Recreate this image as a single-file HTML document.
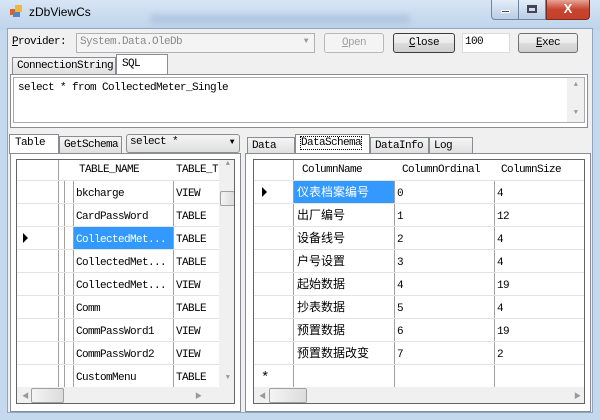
<!DOCTYPE html>
<html><head><meta charset="utf-8"><style>
*{box-sizing:border-box;margin:0;padding:0}
body{width:600px;height:420px;overflow:hidden;background:#c4d8ee;position:relative;font-family:"Liberation Mono","Noto Sans CJK SC",monospace;font-size:11px;letter-spacing:-0.6px;color:#000}
.a{position:absolute}
.client{left:7px;top:28px;width:586px;height:385px;background:#f0f0f0;border:1px solid #8ea6c2}
.btn{border:1px solid #707070;border-radius:3px;background:linear-gradient(#f2f2f2,#ebebeb 50%,#dddddd 50%,#cfcfcf);text-align:center;line-height:18px}
.tab{border:1px solid #898c95;border-bottom:none;background:linear-gradient(#f5f5f5,#e0e0e0);line-height:16px;padding-left:4px}
.tabsel{background:#fff;border:1px solid #898c95;border-bottom:none;padding-left:5px;line-height:18px}
.grid{background:#fff;border:1px solid #646464;overflow:hidden}
.hl{background:#a0a0a0;width:1px}
.row{height:1px;background:#e3e3e3}
.cell{line-height:23px;padding-left:2px;white-space:nowrap}
.lat{padding-top:3px}
.cjk{font-family:"Noto Sans CJK SC","WenQuanYi Zen Hei",sans-serif;font-size:12px;letter-spacing:0}
.sb{background:#f0f0f0}
.thumb{border:1px solid #a0a0a0;border-radius:2px;background:linear-gradient(90deg,#f4f4f4,#dcdcdc)}
</style></head><body>
<div class="a" style="left:0;top:0;width:600px;height:30px;background:linear-gradient(#d7e5f5,#bed3ea)"></div>
<div class="a" style="left:150px;top:14px;width:260px;height:10px;background:#9fb8d4;opacity:.5;filter:blur(3px)"></div>
<div class="a" style="left:10px;top:9px;width:6px;height:6px;background:#d9622b"></div>
<div class="a" style="left:15px;top:5px;width:7px;height:7px;background:#f0b83a"></div>
<div class="a" style="left:13px;top:12px;width:7px;height:5px;background:#4f86c6"></div>
<div class="a" style="left:29px;top:5px;font-family:'Liberation Sans',sans-serif;font-size:12px;letter-spacing:0">zDbViewCs</div>
<div class="a" style="left:491px;top:0;width:28px;height:20px;border:1px solid #6d85a3;border-top:none;border-radius:0 0 0 4px;background:linear-gradient(#e4edf8,#b9cde5)"><div class="a" style="left:9px;top:10px;width:9px;height:3px;background:#445;border:1px solid #fff"></div></div>
<div class="a" style="left:519px;top:0;width:27px;height:20px;border:1px solid #6d85a3;border-top:none;border-left:none;background:linear-gradient(#e4edf8,#b9cde5)"><div class="a" style="left:8px;top:5px;width:10px;height:8px;border:2px solid #445;border-top-width:3px"></div></div>
<div class="a" style="left:546px;top:0;width:44px;height:20px;border:1px solid #7a2a20;border-top:none;border-radius:0 0 4px 0;background:linear-gradient(#e8a495,#c7442f 50%,#c4402a);color:#fff;font:bold 13px 'Liberation Sans',sans-serif;text-align:center;line-height:18px;letter-spacing:0">X</div>
<div class="a client"></div>
<div class="a" style="left:12px;top:36px"><u>P</u>rovider:</div>
<div class="a" style="left:76px;top:33px;width:239px;height:20px;border:1px solid #b0b0b0;background:#f4f4f4;color:#8a8a8a;padding:2px 0 0 3px">System.Data.OleDb<span class="a" style="right:6px;top:3px;color:#999;font-size:8px">▼</span></div>
<div class="a btn" style="left:324px;top:33px;width:60px;height:20px;color:#a0a0a0;border-color:#b8b8b8;background:#f4f4f4"><u>O</u>pen</div>
<div class="a btn" style="left:393px;top:33px;width:62px;height:20px;border-color:#3c3c3c"><u>C</u>lose</div>
<div class="a" style="left:462px;top:33px;width:48px;height:20px;border:1px solid #dcdcdc;background:#fff;padding:2px 0 0 2px">100</div>
<div class="a btn" style="left:518px;top:33px;width:60px;height:20px"><u>E</u>xec</div>
<div class="a tab" style="left:12px;top:57px;width:104px;height:17px">ConnectionString</div>
<div class="a tabsel" style="left:116px;top:54px;width:52px;height:21px">SQL</div>
<div class="a" style="left:10px;top:74px;width:578px;height:54px;border:1px solid #898c95;background:#fff"></div>
<div class="a" style="left:13px;top:77px;width:572px;height:46px;border:1px solid #ababab;background:#fff;padding:4px 0 0 4px">select * from CollectedMeter_Single</div>
<div class="a sb" style="left:567px;top:78px;width:17px;height:44px;color:#999;font-size:7px;text-align:center;line-height:14px">▲<br><br>▼</div>
<div class="a tabsel" style="left:9px;top:134px;width:50px;height:20px;line-height:17px">Table</div>
<div class="a tab" style="left:59px;top:136px;width:63px;height:17px">GetSchema</div>
<div class="a" style="left:126px;top:134px;width:114px;height:19px;border:1px solid #8e8f8f;border-radius:3px;background:linear-gradient(#f4f4f4,#dfdfdf);padding:1px 0 0 3px">select *<span class="a" style="right:5px;top:3px;font-size:8px">▼</span></div>
<div class="a" style="left:10px;top:153px;width:231px;height:259px;border:1px solid #898c95;background:#fff"></div>
<div class="a grid" style="left:16px;top:159px;width:219px;height:245px">
  <div class="a" style="left:62px;top:4px">TABLE_NAME</div>
  <div class="a" style="left:159px;top:4px">TABLE_T</div>
  <div class="a hl" style="left:41px;top:0;height:227px"></div>
  <div class="a hl" style="left:47px;top:20px;height:207px"></div>
  <div class="a hl" style="left:56px;top:20px;height:207px"></div>
  <div class="a hl" style="left:156px;top:20px;height:207px"></div>
  <div class="a" style="left:0;top:20px;width:202px">
   <div class="a row" style="top:0;width:202px"></div><div class="a row" style="top:23px;width:202px"></div><div class="a row" style="top:46px;width:202px"></div><div class="a row" style="top:69px;width:202px"></div><div class="a row" style="top:92px;width:202px"></div><div class="a row" style="top:115px;width:202px"></div><div class="a row" style="top:138px;width:202px"></div><div class="a row" style="top:161px;width:202px"></div><div class="a row" style="top:184px;width:202px"></div>
   <div class="a" style="left:57px;top:47px;width:99px;height:22px;background:#3399ff"></div>
   <div class="a" style="left:6px;top:53px;width:0;height:0;border-left:5px solid #000;border-top:5px solid transparent;border-bottom:5px solid transparent"></div>
   <div class="a cell lat" style="left:57px;top:0">bkcharge<br>CardPassWord<br><span style="color:#fff">CollectedMet...</span><br>CollectedMet...<br>CollectedMet...<br>Comm<br>CommPassWord1<br>CommPassWord2<br>CustomMenu</div>
   <div class="a cell lat" style="left:157px;top:0">VIEW<br>TABLE<br>TABLE<br>TABLE<br>VIEW<br>TABLE<br>VIEW<br>VIEW<br>TABLE</div>
  </div>
  <div class="a sb" style="left:202px;top:0;width:17px;height:227px;color:#999;font-size:7px;text-align:center">▲</div>
  <div class="a thumb" style="left:203px;top:31px;width:15px;height:15px"></div>
  <div class="a" style="left:202px;top:214px;width:17px;font-size:7px;color:#999;text-align:center">▼</div>
  <div class="a sb" style="left:0;top:227px;width:219px;height:18px;font-size:7px;color:#999"><span class="a" style="left:5px;top:4px">◀</span><div class="a thumb" style="left:14px;top:1px;width:33px;height:15px"></div><span class="a" style="left:178px;top:4px">▶</span></div>
</div>
<div class="a tab" style="left:247px;top:137px;width:48px;height:16px">Data</div>
<div class="a tabsel" style="left:295px;top:134px;width:75px;height:20px;line-height:17px"><span style="outline:1px dotted #000">DataSchema</span></div>
<div class="a tab" style="left:370px;top:137px;width:59px;height:16px">DataInfo</div>
<div class="a tab" style="left:429px;top:137px;width:44px;height:16px">Log</div>
<div class="a" style="left:245px;top:153px;width:346px;height:259px;border:1px solid #898c95;background:#fff"></div>
<div class="a grid" style="left:253px;top:159px;width:332px;height:245px">
  <div class="a" style="left:48px;top:4px">ColumnName</div>
  <div class="a" style="left:148px;top:4px">ColumnOrdinal</div>
  <div class="a" style="left:247px;top:4px">ColumnSize</div>
  <div class="a hl" style="left:39px;top:0;height:227px"></div>
  <div class="a hl" style="left:140px;top:20px;height:207px"></div>
  <div class="a hl" style="left:240px;top:20px;height:207px"></div>
  <div class="a" style="left:0;top:20px;width:331px">
   <div class="a row" style="top:0;width:331px"></div><div class="a row" style="top:23px;width:331px"></div><div class="a row" style="top:46px;width:331px"></div><div class="a row" style="top:69px;width:331px"></div><div class="a row" style="top:92px;width:331px"></div><div class="a row" style="top:115px;width:331px"></div><div class="a row" style="top:138px;width:331px"></div><div class="a row" style="top:161px;width:331px"></div><div class="a row" style="top:184px;width:331px"></div>
   <div class="a" style="left:40px;top:1px;width:100px;height:22px;background:#3399ff"></div>
   <div class="a" style="left:8px;top:7px;width:0;height:0;border-left:5px solid #000;border-top:5px solid transparent;border-bottom:5px solid transparent"></div>
   <div class="a" style="left:7px;top:190px;font-size:14px">*</div>
   <div class="a cell cjk" style="left:41px;top:0">　<br>出厂编号<br>设备线号<br>户号设置<br>起始数据<br>抄表数据<br>预置数据<br>预置数据改变</div>
   <div class="a cell cjk" style="left:41px;top:0;color:#fff">仪表档案编号</div>
   <div class="a cell lat" style="left:141px;top:0">0<br>1<br>2<br>3<br>4<br>5<br>6<br>7</div>
   <div class="a cell lat" style="left:241px;top:0">4<br>12<br>4<br>4<br>19<br>4<br>19<br>2</div>
  </div>
  <div class="a sb" style="left:0;top:227px;width:332px;height:18px;font-size:7px;color:#999"><span class="a" style="left:5px;top:4px">◀</span><div class="a thumb" style="left:15px;top:1px;width:38px;height:15px"></div><span class="a" style="left:320px;top:4px">▶</span></div>
</div>
</body></html>
